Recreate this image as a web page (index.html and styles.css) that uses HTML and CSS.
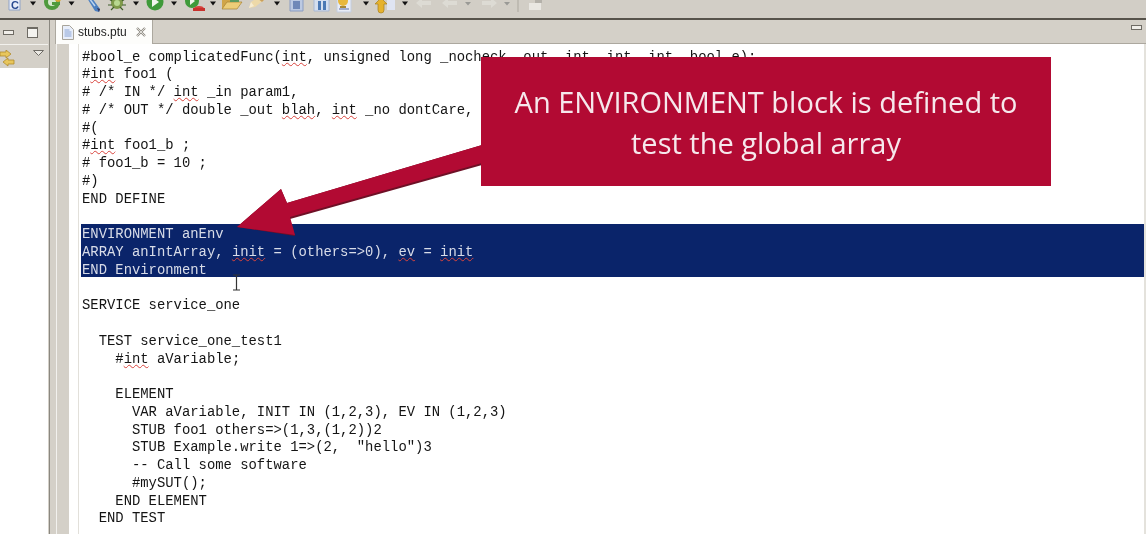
FILE: index.html
```html
<!DOCTYPE html>
<html lang="en">
<head>
<meta charset="utf-8">
<title>stubs.ptu</title>
<link rel="stylesheet" href="styles.css">
</head>
<body>
<svg class="defs" width="0" height="0" aria-hidden="true">
  <symbol id="drop" viewBox="0 0 10 18"><path d="M2 1.500h6L5 5.500z" fill="#111"/></symbol>
  <symbol id="dropgrey" viewBox="0 0 10 18"><path d="M2 2h6L5 5.500z" fill="#9a9a96"/></symbol>
</svg>
<header class="toolbar">
  <svg width="22" height="18"><path d="M3 -2h11v12H3z" fill="#e8ecf8" stroke="#8fa3c8"/><text x="5" y="8.500" class="ico-c">C</text></svg>
  <svg width="10" height="18"><use href="#drop"/></svg>
  <svg width="28" height="18"><circle cx="14" cy="2" r="8" fill="#4f9a3d"/><circle cx="14" cy="2" r="4" fill="#d8e8d0"/><path d="M14 2h8v3h-8z" fill="#4f9a3d"/><circle cx="20" cy="-1" r="3" fill="#d9a83a"/></svg>
  <svg width="11" height="18"><use href="#drop"/></svg>
  <svg width="28" height="18"><path d="M10 -2l5 0 8 11-1 3-4-1z" fill="#4c7fc0"/><path d="M20 8l3 1-1 3z" fill="#335"/><path d="M12 -2l6 8" stroke="#bcd4ee" stroke-width="1.500"/></svg>
  <svg width="26" height="18"><ellipse cx="12" cy="3" rx="6" ry="6" fill="#7f9a4a"/><circle cx="12" cy="3" r="3" fill="#b8d890"/><path d="M4 -1l3 2M20 -1l-3 2M3 5h4M21 5h-4M6 10l3-3M18 10l-3-3" stroke="#3f5f2a" stroke-width="1.200"/></svg>
  <svg width="10" height="18"><use href="#drop"/></svg>
  <svg width="28" height="18"><circle cx="14" cy="2" r="8.500" fill="#3f9a3a"/><path d="M11 -3l7 5-7 5z" fill="#f2f6ee"/></svg>
  <svg width="10" height="18"><use href="#drop"/></svg>
  <svg width="29" height="18"><circle cx="13" cy="1" r="7" fill="#3f9a3a"/><path d="M11 -3l5 4-5 4z" fill="#eef4ea"/><path d="M15 11v-2q0-3 5-3t5 3v2z" fill="#d8433c"/><path d="M14 8h12v3H14z" fill="#c8312c"/></svg>
  <svg width="10" height="18"><use href="#drop"/></svg>
  <svg width="27" height="18"><path d="M4 -2h16v5h-4L4 9z" fill="#d0a548"/><path d="M4 9l5-7h15l-5 7z" fill="#eccd78" stroke="#a88232" stroke-width=".7"/><path d="M12 -2h9v4h-9z" fill="#5a9a60"/></svg>
  <svg width="27" height="18"><path d="M4 8l2-6 9-6 4 4-9 7z" fill="#edd9a8"/><path d="M4 8l2-6 3 4z" fill="#f6ecd2"/><path d="M13-4l6 4-2 2-5-4z" fill="#caa05c"/></svg>
  <svg width="10" height="18"><use href="#drop"/></svg>
  <svg width="27" height="18"><path d="M8 -2h13v13H8z" fill="#bcc9e2" stroke="#8a9cc2"/><path d="M11 1h7v8h-7z" fill="#7088b8"/></svg>
  <svg width="24" height="18"><path d="M5 -2h15v13H5z" fill="#d4deef" stroke="#a8b8d4"/><path d="M9 1h3v9H9zM14 1h3v9h-3z" fill="#4b78b4"/></svg>
  <svg width="28" height="18"><path d="M4 -2h14v14H4z" fill="#e8ecf6" stroke="#c4cee0"/><circle cx="10" cy="1" r="5" fill="#e8b83c"/><path d="M7 6h6v2H7z" fill="#a8883a"/><path d="M6 9h10" stroke="#5a6ea8"/></svg>
  <svg width="10" height="18"><use href="#drop"/></svg>
  <svg width="29" height="18"><path d="M16 -2h8v12h-8z" fill="#dfe4f2"/><path d="M10 -2l6 6h-3v6a3 3 0 0 1-6 0V4H4z" fill="#e5b22e" stroke="#a8801c" stroke-width=".7"/></svg>
  <svg width="10" height="18"><use href="#drop"/></svg>
  <svg width="28" height="18"><path d="M6 3l6-5v3h9v4h-9v3z" fill="#dddbd4"/></svg>
  <svg width="25" height="18"><path d="M4 3l6-5v3h9v4h-9v3z" fill="#dddbd4"/></svg>
  <svg width="10" height="18"><use href="#dropgrey"/></svg>
  <svg width="29" height="18"><path d="M24 3l-6-5v3H9v4h9v3z" fill="#dddbd4"/></svg>
  <svg width="10" height="18"><use href="#dropgrey"/></svg>
  <svg width="12" height="18"><path d="M6 -2v14" stroke="#aca89f"/></svg>
  <svg width="24" height="18"><path d="M5 3h12v7H5z" fill="#e9e7e2"/><path d="M11 -2h7v5h-7z" fill="#b4b1aa"/></svg>
</header>
<main class="workbench">
  <aside class="side">
    <div class="pane-head">
      <span class="btn-min"></span>
      <span class="btn-max"></span>
    </div>
    <div class="side-tools">
      <svg width="15" height="18"><path d="M0 2h6V0l5 4-5 4V6H0z" fill="#e8c65c" stroke="#b08a2c" stroke-width=".8"/><path d="M14 10H8V8l-5 4 5 4v-2h6z" fill="#e8c65c" stroke="#b08a2c" stroke-width=".8"/></svg>
      <svg width="11" height="6"><path d="M.5.500h10L5.500 5.500z" fill="#eceae4" stroke="#6f6c66"/></svg>
    </div>
    <div class="side-body"></div>
  </aside>
  <div class="sash"></div>
  <section class="editor">
    <div class="tabs">
      <div class="tab">
        <svg width="12" height="15"><path d="M.5.500h7l4 4v10H.500z" fill="#e8eefa" stroke="#a8a49a"/><path d="M2.500 5h5M2.500 7h7M2.500 9h7M2.500 11h7" stroke="#8aa4d4"/></svg>
        <span class="tab-name">stubs.ptu</span>
        <svg width="10" height="10"><path d="M1 1l8 8M9 1l-8 8" stroke="#8d8a82" stroke-width="2.200"/><path d="M1 1l8 8M9 1l-8 8" stroke="#f2f1ee" stroke-width=".8"/></svg>
      </div>
      <span class="btn-min right"></span>
    </div>
    <div class="edit-body">
      <div class="ruler"></div>
      <div class="folding"></div>
      <div class="code">
        <div class="ln">#bool_e complicatedFunc(<u>int</u>, unsigned long _nocheck  out  int  int  int  bool_e);</div>
        <div class="ln">#<u>int</u> foo1 (</div>
        <div class="ln"># /* IN */ <u>int</u> _in param1,</div>
        <div class="ln"># /* OUT */ double _out <u>blah</u>, <u>int</u> _no dontCare,</div>
        <div class="ln">#(</div>
        <div class="ln">#<u>int</u> foo1_b ;</div>
        <div class="ln"># foo1_b = 10 ;</div>
        <div class="ln">#)</div>
        <div class="ln">END DEFINE</div>
        <div class="ln"></div>
        <div class="sel">
          <div class="ln">ENVIRONMENT anEnv</div>
          <div class="ln">ARRAY anIntArray, <u>init</u> = (others=&gt;0), <u>ev</u> = <u>init</u></div>
          <div class="ln">END Environment</div>
        </div>
        <div class="ln"></div>
        <div class="ln">SERVICE service_one</div>
        <div class="ln"></div>
        <div class="ln">  TEST service_one_test1</div>
        <div class="ln">    #<u>int</u> aVariable;</div>
        <div class="ln"></div>
        <div class="ln">    ELEMENT</div>
        <div class="ln">      VAR aVariable, INIT IN (1,2,3), EV IN (1,2,3)</div>
        <div class="ln">      STUB foo1 others=&gt;(1,3,(1,2))2</div>
        <div class="ln">      STUB Example.write 1=&gt;(2,  "hello")3</div>
        <div class="ln">      -- Call some software</div>
        <div class="ln">      #mySUT();</div>
        <div class="ln">    END ELEMENT</div>
        <div class="ln">  END TEST</div>
      </div>
      <div class="vbar"></div>
    </div>
  </section>
</main>
<svg class="arrow" width="1146" height="534" aria-hidden="true">
  <path d="M237 227L281 189 287 203 482 145V165L290 219 295 236z" fill="#6e1026"/>
  <path d="M237 227L281 189 287 203 482 145V163L290 217 295 235z" fill="#b20a33"/>
</svg>
<div class="callout">An ENVIRONMENT block is defined to<br>test the global array</div>
<svg class="ibeam" width="9" height="18" aria-hidden="true"><path d="M1 1h7M4.500 1v15M1 16h7" stroke="#333" fill="none" stroke-width="1.200"/></svg>
</body>
</html>
```
FILE: styles.css
```css
html, body {
  margin: 0;
  height: 534px;
  overflow: hidden;
  background: #d4d0c8;
}
body { filter: blur(.35px); }
.defs { position: absolute; }
.toolbar {
  height: 18px;
  padding-left: 6px;
  display: flex;
  background: #d2cec6;
  overflow: hidden;
  border-bottom: 2px solid #57534b;
}
.toolbar svg { flex: none; display: block; overflow: hidden; }
.ico-c {
  font: bold 11px "Liberation Sans", sans-serif;
  fill: #2a4a90;
}
.workbench {
  display: flex;
  height: 514px;
}
.side {
  width: 48px;
  flex: none;
  display: flex;
  flex-direction: column;
}
.pane-head {
  height: 24px;
  display: flex;
  align-items: center;
  justify-content: flex-end;
  gap: 13px;
  padding-right: 10px;
  box-sizing: border-box;
  background: #d4d0c8;
}
.btn-min {
  width: 9px;
  height: 3px;
  border: 1px solid #6e6b64;
  background: #f0eee9;
}
.btn-max {
  width: 9px;
  height: 8px;
  border: 1px solid #6e6b64;
  border-top-width: 2px;
  background: #f4f3ef;
}
.side-tools {
  height: 24px;
  background: #d4d0c8;
  border-top: 1px solid #f2f1ed;
  display: flex;
  justify-content: space-between;
  padding: 5px 4px 0 0;
  box-sizing: border-box;
}
.side-body {
  flex: 1;
  background: #fff;
}
.sash {
  width: 6px;
  flex: none;
  margin-left: 1px;
  background: #d4d0c8;
  border-left: 1px solid #8b8880;
  border-right: 1px solid #f2f1ee;
}
.editor {
  flex: 1;
  min-width: 0;
  display: flex;
  flex-direction: column;
}
.tabs {
  height: 24px;
  flex: none;
  display: flex;
  align-items: flex-start;
  justify-content: space-between;
  background: #d4d0c8;
  border-bottom: 1px solid #aca89f;
  box-sizing: border-box;
}
.tab {
  width: 98px;
  height: 24px;
  margin-left: -2px;
  box-sizing: border-box;
  padding-left: 6px;
  display: flex;
  align-items: center;
  gap: 4px;
  background: #fdfdfb;
  border-left: 1px solid #aca89f;
  border-right: 1px solid #aca89f;
  font: 12px "Liberation Sans", sans-serif;
  color: #222;
}
.tab-name { margin-right: 5px; }
.btn-min.right { margin: 5px 4px 0 0; }
.edit-body {
  flex: 1;
  min-height: 0;
  display: flex;
  background: #fff;
  overflow: hidden;
}
.ruler {
  width: 12px;
  flex: none;
  background: #d4d0c8;
}
.folding {
  width: 9px;
  flex: none;
  border-right: 1px solid #e2e0da;
}
.code {
  flex: 1;
  min-width: 0;
  padding-top: 4.500px;
  padding-left: 3px;
  font: 13.880px/17.770px "Liberation Mono", monospace;
  color: #141414;
}
.ln {
  height: 17.770px;
  white-space: pre;
}
.ln u {
  text-decoration: underline wavy #d8433c 1px;
  text-underline-offset: 1px;
}
.sel {
  margin: -1.700px 0 2px -1px;
  padding: 1.700px 0 0 1px;
  height: 53px;
  box-sizing: border-box;
  background: #0a246a;
  color: #d8dce8;
}
.vbar {
  width: 2px;
  flex: none;
  background: #e4e2dc;
}
.arrow {
  position: absolute;
  left: 0;
  top: 0;
}
.callout {
  position: absolute;
  left: 481px;
  top: 57px;
  width: 570px;
  height: 129px;
  box-sizing: border-box;
  padding-top: 24px;
  background: #b20a33;
  color: #f6e8ec;
  font: 29px/41px "Open Sans", sans-serif;
  text-align: center;
}
.ibeam {
  position: absolute;
  left: 232px;
  top: 274px;
}
```
